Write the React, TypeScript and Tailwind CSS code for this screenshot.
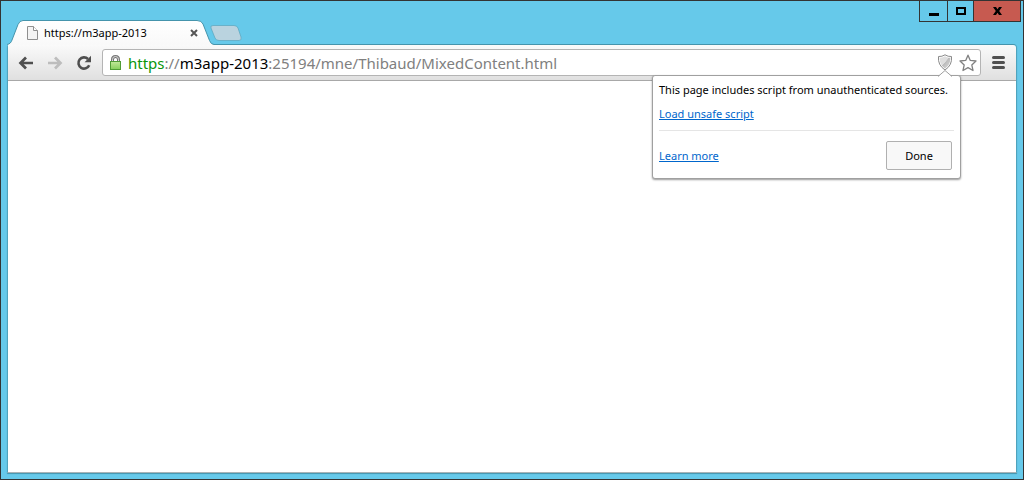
import React, { useState } from 'react';

const urlParts = [
  { text: 'https', className: 'text-[#0a960a]' },
  { text: '://', className: 'text-[#808080]' },
  { text: 'm3app-2013', className: 'text-black' },
  { text: ':25194/mne/Thibaud/MixedContent.html', className: 'text-[#808080]' },
];

/** Minimize / maximize / close */
const WindowControls = () => (
  <div className="flex h-[21px] border-x border-b border-[#333] divide-x divide-[#333]">
    <button aria-label="Minimize" className="w-7 flex items-center justify-center">
      <svg width="10" height="9" shapeRendering="crispEdges"><path d="M0 6h10v3H0z" /></svg>
    </button>
    <button aria-label="Maximize" className="w-[26px] flex items-center justify-center">
      <svg width="10" height="8" shapeRendering="crispEdges"><path fillRule="evenodd" d="M0 0h10v8H0zM2 2v4h6V2z" /></svg>
    </button>
    <button aria-label="Close" className="w-[46px] flex items-center justify-center bg-[#c75a50]">
      <svg width="9" height="8"><path d="M0 0h3l1.500 2.200L6 0h3L6.200 4 9 8H6L4.500 5.800 3 8H0l2.800-4z" /></svg>
    </button>
  </div>
);

const TabStrip = () => (
  <div className="flex items-end">
    <div className="relative flex items-center w-[207px] h-[25px] pl-5 pr-4 -mb-px z-10">
      <svg className="absolute inset-0" width="207" height="25" aria-hidden="true">
        <defs>
          <linearGradient id="tab" x1="0" y1="0" x2="0" y2="1">
            <stop offset="0" stopColor="#fff" />
            <stop offset="1" stopColor="#f9f9f9" />
          </linearGradient>
        </defs>
        <path d="M0 25V24.500C3 24 4 22.500 5 20L11 4.500Q12.500.5 16 .5H190Q194.500.5 196 4L202.500 20.500Q204 24.500 207 24.500V25z" fill="url(#tab)" />
        <path d="M0 24.500C3 24 4 22.500 5 20L11 4.500Q12.500.5 16 .5H190Q194.500.5 196 4L202.500 20.500Q204 24.500 207 24.500" fill="none" stroke="#4594ac" />
      </svg>
      <svg className="relative" width="11" height="14" aria-hidden="true">
        <path d="M.5.5h6l4 4v9H.5z" fill="#f4f4f4" stroke="#8f8f8f" />
        <path d="M6.500.5v4h4" fill="#fff" stroke="#8f8f8f" />
      </svg>
      <span className="relative flex-1 ml-1.5 text-[11px] leading-4">https://m3app-2013</span>
      <button aria-label="Close tab" className="relative">
        <svg width="8" height="8"><path d="M1 1l6 6M7 1L1 7" stroke="#555" strokeWidth="2" /></svg>
      </button>
    </div>
    <button aria-label="New tab" className="mb-[3px] -ml-1">
      <svg width="32" height="16">
        <path d="M3 .5H24Q27 .5 28 3L31 12Q32 15.500 29 15.500H9Q6 15.500 5 13L1 3Q0 .5 3 .5z" fill="#bad3df" stroke="#5aa5bd" strokeOpacity=".7" />
      </svg>
    </button>
  </div>
);

const ScriptBubble = () => (
  <div className="absolute top-full right-[19px] w-[309px] px-1.5 pb-2 bg-white border border-[#a0a0a0] rounded-[3px] shadow-[0_1px_2px_rgba(0,0,0,0.4)] text-[11px] leading-4 z-20">
    <svg className="absolute -top-[6px] right-[8px]" width="14" height="7" aria-hidden="true">
      <path d="M0 7L7 0l7 7z" fill="#fff" />
      <path d="M0 6.500L7 .5l7 6" fill="none" stroke="#a0a0a0" />
    </svg>
    <p className="pt-[6px] whitespace-nowrap">This page includes script from unauthenticated sources.</p>
    <p className="pt-2 pb-2 border-b border-[#e5e5e5]">
      <a href="#load" className="text-[#0066cc] underline">Load unsafe script</a>
    </p>
    <div className="flex items-center justify-between pt-2.5 pr-0.5">
      <a href="#learn" className="text-[#0066cc] underline">Learn more</a>
      <button className="w-[66px] h-[29px] bg-[#f8f8f8] border border-[#b0b0b0] rounded-[2px]">Done</button>
    </div>
  </div>
);

const AddressBar = () => {
  const [url, setUrl] = useState(urlParts.map(p => p.text).join(''));
  const untouched = url === urlParts.map(p => p.text).join('');

  return (
    <div className="relative flex items-center flex-1 h-[27px] pl-1.5 pr-[3px] bg-white border border-[#b4b4b4] rounded-[3px]">
      <svg width="13" height="16" aria-label="Secure">
        <defs>
          <linearGradient id="lock" x1="0" y1="0" x2="0" y2="1">
            <stop offset="0" stopColor="#c2e89a" />
            <stop offset="1" stopColor="#86cf5c" />
          </linearGradient>
        </defs>
        <path d="M3.500 8V4.500Q3.500 1.500 6.500 1.500T9.500 4.500V8" fill="none" stroke="#777" strokeWidth="3" />
        <path d="M3.500 8V4.500Q3.500 1.500 6.500 1.500T9.500 4.500V8" fill="none" stroke="#ddd" />
        <rect x="1.500" y="6.500" width="10" height="8" fill="url(#lock)" stroke="#4f9c35" />
      </svg>
      <div className="relative flex-1 ml-1.5 text-[15px] leading-6">
        <input
          aria-label="Address"
          value={url}
          onChange={e => setUrl(e.target.value)}
          className={untouched ? 'block w-full outline-none text-transparent caret-black' : 'block w-full outline-none'}
        />
        {untouched && (
          <div aria-hidden="true" className="absolute inset-0 pointer-events-none whitespace-nowrap">
            {urlParts.map(p => <span key={p.text} className={p.className}>{p.text}</span>)}
          </div>
        )}
      </div>
      <button aria-label="Insecure script blocked">
        <svg width="16" height="17">
          <defs>
            <linearGradient id="shield" x1="0" y1="0" x2="1" y2="1">
              <stop offset=".48" stopColor="#dedede" />
              <stop offset=".5" stopColor="#bbb" />
              <stop offset="1" stopColor="#ddd" />
            </linearGradient>
          </defs>
          <path d="M8 .8Q11 2.800 14.500 2.500Q15.500 11 8 16Q.5 11 1.500 2.500Q5 2.800 8 .8z" fill="#fff" stroke="#8a8a8a" />
          <path d="M8 2.300Q10.500 3.900 13.400 3.600Q13.800 10.500 8 14.800Q2.200 10.500 2.600 3.600Q5.500 3.900 8 2.300z" fill="url(#shield)" />
        </svg>
      </button>
      <button aria-label="Bookmark this page" className="ml-1.5">
        <svg width="18" height="18">
          <path d="M9 1.200L11.300 6.400L17 7L12.800 10.900L14 16.500L9 13.600L4 16.500L5.200 10.900L1 7L6.700 6.400z" fill="#fff" stroke="#808080" strokeWidth="1.300" strokeLinejoin="round" />
        </svg>
      </button>
      <ScriptBubble />
    </div>
  );
};

const Toolbar = () => (
  <div className="flex items-center h-9 pl-[3px] border-b border-[#a8a8a8] bg-linear-to-b from-[#fafafa] to-[#e0e0e0] rounded-tr-[3px]">
    <button aria-label="Back" className="w-[29px] flex justify-center">
      <svg width="16" height="14"><path d="M8 1.500L2.500 7L8 12.500M3 7H15" fill="none" stroke="#4f4f4f" strokeWidth="2.700" /></svg>
    </button>
    <button aria-label="Forward" className="w-[29px] flex justify-center" disabled>
      <svg width="16" height="14"><path d="M8 1.500L13.500 7L8 12.500M13 7H1" fill="none" stroke="#bdbdbd" strokeWidth="2.700" /></svg>
    </button>
    <button aria-label="Reload" className="w-[29px] flex justify-center mr-1">
      <svg width="16" height="16">
        <path d="M12 4A5.600 5.600 0 1 0 13.200 10.200" fill="none" stroke="#4f4f4f" strokeWidth="2.600" />
        <path d="M15 .8V7.200H8.600z" fill="#4f4f4f" />
      </svg>
    </button>
    <AddressBar />
    <button aria-label="Menu" className="w-[35px] flex justify-center">
      <svg width="13" height="13"><path d="M1.500 1.500h10M1.500 6.500h10M1.500 11.500h10" stroke="#505050" strokeWidth="3" strokeLinecap="round" /></svg>
    </button>
  </div>
);

export default function App() {
  return (
    <div className="min-h-screen flex flex-col border border-[#333] bg-[#66c9ea] text-black font-['Noto_Sans','Open_Sans',sans-serif]">
      <header className="flex justify-between h-[43px] pl-[6px] pr-0.5">
        <TabStrip />
        <WindowControls />
      </header>
      <div className="flex-1 flex flex-col mx-[6px] mb-[6px] border border-t-[#4594ac] border-x-[#4fa3bd] border-b-[#a9b3b6] rounded-t-[4px] shadow-[0_1px_1px_#4594ac]">
        <Toolbar />
        <main className="flex-1 bg-white" />
      </div>
    </div>
  );
}
